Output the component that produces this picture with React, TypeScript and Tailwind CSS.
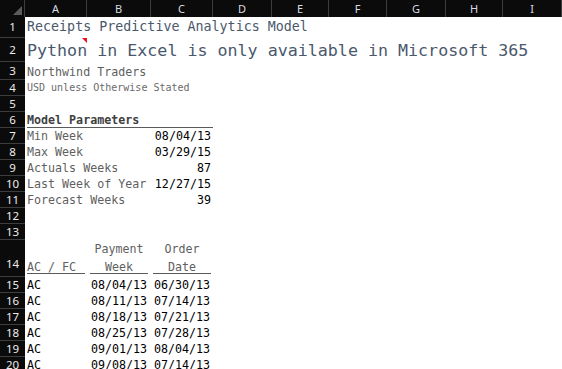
import type { ReactNode } from "react"

const COLS: [string, string][] = [
  ["A", "w-[62px]"],
  ["B", "w-[64px]"],
  ["C", "w-[62px]"],
  ["D", "w-[59px]"],
  ["E", "w-[57px]"],
  ["F", "w-[58px]"],
  ["G", "w-[59px]"],
  ["H", "w-[57px]"],
  ["I", "w-[59px]"],
]

const PARAMS = [
  ["Min Week", "08/04/13"],
  ["Max Week", "03/29/15"],
  ["Actuals Weeks", "87"],
  ["Last Week of Year", "12/27/15"],
  ["Forecast Weeks", "39"],
]

const DATA = [
  ["08/04/13", "06/30/13"],
  ["08/11/13", "07/14/13"],
  ["08/18/13", "07/21/13"],
  ["08/25/13", "07/28/13"],
  ["09/01/13", "08/04/13"],
  ["09/08/13", "07/14/13"],
]

function Row({ n, h, tall, children }: { n: number; h: string; tall?: boolean; children?: ReactNode }) {
  return (
    <div className={`flex ${h}`}>
      <div
        className={`flex w-[25px] shrink-0 justify-center border-b border-[#3d3d3d] bg-[#0b0b0b] font-['Noto_Sans',sans-serif] text-[11.5px] leading-[16px] text-[#ececec] ${
          tall ? "items-end pb-[4px]" : "items-center"
        }`}
      >
        {n}
      </div>
      <div className="flex flex-1">{children}</div>
    </div>
  )
}

export default function App() {
  return (
    <div className="h-[369px] w-[562px] overflow-hidden bg-white font-['DejaVu_Sans_Mono',monospace]">
      {/* column headers */}
      <div className="flex h-[17px] bg-[#0b0b0b] font-['Noto_Sans',sans-serif] text-[11px] text-[#d8dde4]">
        <div className="relative w-[25px] shrink-0 border-r border-[#3d3d3d]">
          <div className="absolute bottom-[2px] right-[2px] h-0 w-0 border-b-[9px] border-l-[9px] border-b-[#5c5c5c] border-l-transparent" />
        </div>
        {COLS.map(([c, w]) => (
          <div key={c} className={`${w} flex shrink-0 items-center justify-center border-r border-[#3d3d3d] leading-[17px]`}>
            {c}
          </div>
        ))}
      </div>

      <Row n={1} h="h-[21px]">
        <div className="flex items-end whitespace-nowrap pb-[3px] pl-[2px] text-[13.33px] leading-[16px] text-[#4a586c]">
          Receipts Predictive Analytics Model
        </div>
      </Row>
      <Row n={2} h="h-[24px]">
        <div className="relative flex w-[62px] shrink-0 items-end whitespace-nowrap pb-[1px] pl-[2px] text-[16.67px] leading-[20px] text-[#4a586c]">
          Python in Excel is only available in Microsoft 365
          <div className="absolute right-0 top-0 h-0 w-0 border-l-[5px] border-t-[5px] border-l-transparent border-t-[#e81123]" />
        </div>
      </Row>
      <Row n={3} h="h-[18px]">
        <div className="flex items-end whitespace-nowrap pb-[1px] pl-[2px] text-[11.67px] leading-[14px] text-[#5f5f5f]">
          Northwind Traders
        </div>
      </Row>
      <Row n={4} h="h-[16px]">
        <div className="flex items-end whitespace-nowrap pb-[2px] pl-[2px] text-[10px] leading-[12px] text-[#6a6a6a]">
          USD unless Otherwise Stated
        </div>
      </Row>
      <Row n={5} h="h-[16px]" />
      <Row n={6} h="h-[16px]">
        <div className="ml-[2px] flex w-[186px] items-end border-b border-[#5a5a5a] text-[11.67px] font-bold leading-[14px] text-[#404040]">
          Model Parameters
        </div>
      </Row>
      {PARAMS.map(([label, value], i) => (
        <Row key={label} n={7 + i} h="h-[16px]">
          <div className="flex w-[126px] shrink-0 items-end whitespace-nowrap pb-[1px] pl-[2px] text-[11.67px] leading-[14px] text-[#5f5f5f]">
            {label}
          </div>
          <div className="flex w-[62px] shrink-0 items-end justify-end pb-[1px] pr-[2px] text-[11.67px] leading-[14px] text-black">
            {value}
          </div>
        </Row>
      ))}
      <Row n={12} h="h-[16px]" />
      <Row n={13} h="h-[16px]" />
      <Row n={14} h="h-[37px]" tall>
        <div className="flex w-[62px] shrink-0 flex-col justify-end px-[2px] pb-[3px] text-[11.67px] leading-[12px] text-[#5f5f5f]">
          <div className="border-b border-[#5a5a5a]">AC / FC</div>
        </div>
        <div className="flex w-[64px] shrink-0 flex-col justify-end px-[3px] pb-[3px] text-center text-[11.67px] leading-[12px] text-[#5f5f5f]">
          <div className="mb-[6px]">Payment</div>
          <div className="border-b border-[#5a5a5a]">Week</div>
        </div>
        <div className="flex w-[62px] shrink-0 flex-col justify-end px-[2px] pb-[3px] text-center text-[11.67px] leading-[12px] text-[#5f5f5f]">
          <div className="mb-[6px]">Order</div>
          <div className="border-b border-[#5a5a5a]">Date</div>
        </div>
      </Row>
      {DATA.map(([week, order], i) => (
        <Row key={i} n={15 + i} h="h-[16px]">
          <div className="flex w-[62px] shrink-0 items-end pb-[1px] pl-[2px] text-[11.67px] leading-[14px] text-black">AC</div>
          <div className="flex w-[64px] shrink-0 items-end justify-center pb-[1px] text-[11.67px] leading-[14px] text-black">
            {week}
          </div>
          <div className="flex w-[62px] shrink-0 items-end justify-center pb-[1px] text-[11.67px] leading-[14px] text-black">
            {order}
          </div>
        </Row>
      ))}
    </div>
  )
}
